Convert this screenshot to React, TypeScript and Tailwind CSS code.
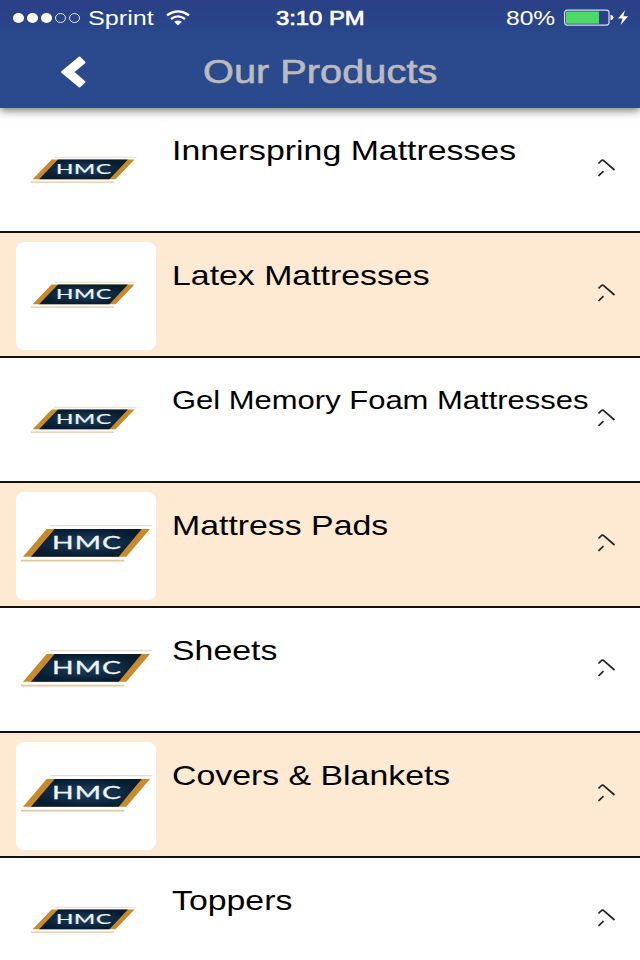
import React from "react";

type Product = {
    name: string;
    logo: "small" | "large";
};

const products: Product[] = [
    { name: "Innerspring Mattresses", logo: "small" },
    { name: "Latex Mattresses", logo: "small" },
    { name: "Gel Memory Foam Mattresses", logo: "small" },
    { name: "Mattress Pads", logo: "large" },
    { name: "Sheets", logo: "large" },
    { name: "Covers & Blankets", logo: "large" },
    { name: "Toppers", logo: "small" },
];

const Logo = ({ size }: { size: "small" | "large" }) => (
    <svg
        viewBox="62 132 396 114"
        preserveAspectRatio="none"
        className={size === "large" ? "w-[132px] h-[38px] mb-[6px] ml-[1px]" : "w-[106px] h-[27px] mb-[3px] mr-[4px]"}
    >
        <defs>
            <radialGradient id={`navy-${size}`}>
                <stop offset="0" stopColor="#1d4263" />
                <stop offset="1" stopColor="#071c2f" />
            </radialGradient>
        </defs>
        <path d="M150 137H456" stroke="#e6dccf" strokeWidth="4" />
        <path d="M68 230L139 147H449L378 230Z" fill="#c98a2b" />
        <path d="M92 230L163 147H424L355 230Z" fill={`url(#navy-${size})`} />
        <path d="M62 242H372" stroke="#e3c7a0" strokeWidth="5" />
        <text
            x="155"
            y="208"
            fontSize="53"
            letterSpacing="2"
            textLength="210"
            lengthAdjust="spacingAndGlyphs"
            fill="#f1f4f7"
            stroke="#f1f4f7"
            strokeWidth="0.8"
            fontFamily="Lato, sans-serif"
        >
            HMC
        </text>
    </svg>
);

const StatusBar = () => (
    <div className="h-[35px] flex items-center text-white text-[20px] leading-[24px] whitespace-nowrap">
        <svg width="68" height="12" viewBox="0 0 68 12" className="ml-[13px]">
            <ellipse cx="5.5" cy="6" rx="5.5" ry="5" fill="#fff" />
            <ellipse cx="19.5" cy="6" rx="5.5" ry="5" fill="#fff" />
            <ellipse cx="33.5" cy="6" rx="5.5" ry="5" fill="#fff" />
            <ellipse cx="47.5" cy="6" rx="5" ry="4.5" fill="none" stroke="#dfe6f5" />
            <ellipse cx="61.5" cy="6" rx="5" ry="4.5" fill="none" stroke="#dfe6f5" />
        </svg>
        <div className="w-[78px] ml-[7px]">
            <span className="inline-block origin-left scale-x-[1.26]">Sprint</span>
        </div>
        <svg width="24" height="16" viewBox="0 0 24 16" fill="none" stroke="#fff" strokeWidth="2.3">
            <path d="M1 5.2Q12 -2.6 23 5.2" />
            <path d="M5 9Q12 3.8 19 9" />
            <path d="M8.2 11.8Q12 9 15.8 11.8L12 15.6Z" fill="#fff" stroke="none" />
        </svg>
        <div className="w-[230px] ml-[86px]">
            <span className="inline-block origin-left scale-x-[1.19] [-webkit-text-stroke:0.7px_#fff]">3:10 PM</span>
        </div>
        <div className="w-[58px]">
            <span className="inline-block origin-left scale-x-[1.23]">80%</span>
        </div>
        <svg width="66" height="18" viewBox="0 0 66 18">
            <rect x="0.6" y="1.1" width="44.4" height="15" rx="2.5" fill="none" stroke="#d5def2" strokeWidth="1.2" />
            <rect x="2" y="2.5" width="33" height="12.2" fill="#4cd964" />
            <path d="M46.5 5.8Q49.5 6.5 49.5 8.5T46.5 11.5Z" fill="#fff" />
            <path d="M61 1.2L54 9.5H58.6L56.6 16L64.2 7.2H59.4Z" fill="#fff" />
        </svg>
    </div>
);

const ProductRow = ({ product, striped }: { product: Product; striped: boolean }) => (
    <li className={`h-[125px] flex border-b-2 border-[#111] pl-4 ${striped ? "bg-[#feead2]" : "bg-white"}`}>
        <div className="w-[140px] h-[108px] mt-[9px] shrink-0 rounded-lg bg-white flex items-center justify-center">
            <Logo size={product.logo} />
        </div>
        <div className="w-[442px] pl-4 pt-[26px] whitespace-nowrap">
            {/* long names get a smaller size so they clear the arrow */}
            <span
                className={`inline-block origin-left leading-8 text-black ${
                    product.name.length > 24 ? "text-[25.6px] scale-x-[1.21]" : "text-[28.5px] scale-x-[1.187]"
                }`}
            >
                {product.name}
            </span>
        </div>
        <svg
            width="20"
            height="20"
            viewBox="0 0 20 20"
            className="mt-[50px] shrink-0"
            fill="none"
            stroke="#222"
            strokeWidth="1.7"
        >
            <path d="M0.5 5.5L3 3Q4.5 1.5 6 2.8L16.5 12" />
            <path d="M0.5 18L5.5 13.2" />
        </svg>
    </li>
);

export default function App() {
    return (
        <div className="w-[640px] h-[960px] overflow-hidden bg-white font-['Liberation_Sans',Arial,sans-serif]">
            <header className="relative h-[108px] bg-linear-to-b from-[#293f86] to-[#2a4a8d] to-40% shadow-[0_2px_9px_rgba(0,0,0,0.6)]">
                <StatusBar />
                <div className="flex items-center h-[73px]">
                    <svg width="26" height="32" viewBox="0 0 26 32" className="ml-[60px]">
                        <path
                            d="M19.5 1.5L24.5 6.5L13 16L24.5 26L19.5 30.5L2 16Z"
                            fill="#fff"
                            stroke="#fff"
                            strokeWidth="2"
                            strokeLinejoin="round"
                        />
                    </svg>
                    <h1 className="w-[468px] -mt-px text-center text-[34px] leading-10 text-[#b9bac4] [-webkit-text-stroke:0.6px_#b9bac4] [text-shadow:0_1px_1px_#555]">
                        <span className="inline-block scale-x-[1.17]">Our Products</span>
                    </h1>
                </div>
            </header>
            <ul>
                {products.map((product, index) => (
                    <ProductRow key={product.name} product={product} striped={index % 2 === 1} />
                ))}
            </ul>
        </div>
    );
}
